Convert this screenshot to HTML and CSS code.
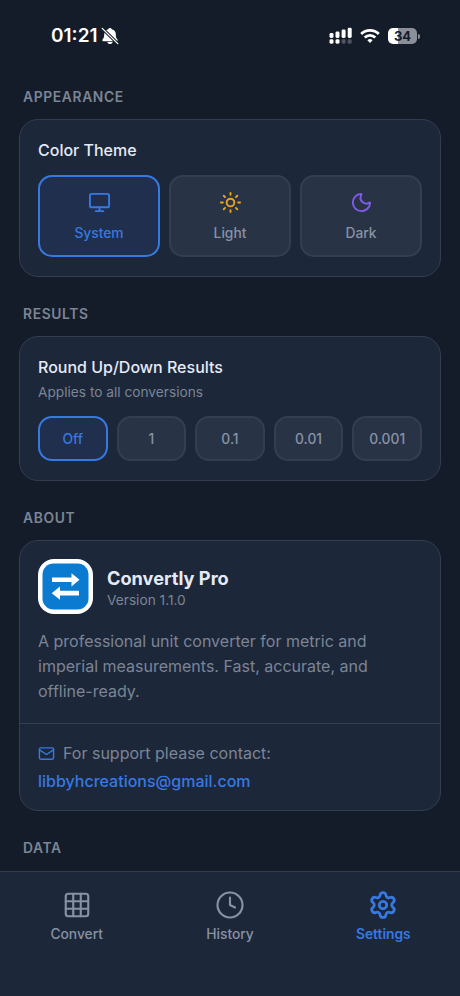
FILE: index.html
```html
<!DOCTYPE html>
<html lang="en">
<head>
    <meta charset="UTF-8">
    <meta name="viewport" content="width=device-width, initial-scale=1.0">
    <title>Convertly Pro - Settings</title>
    <link rel="stylesheet" href="styles.css">
</head>
<body>
    <div class="app">
        <div class="status-bar">
            <span class="time">01:21</span>
            <svg class="bell" width="18" height="18" viewBox="0 0 18 18">
                <path d="M9 1c.9 0 1.6.6 1.8 1.3 2.6.7 4 2.6 4 5 0 3.2.6 4 1.5 5 .6.7.4 1.9-.6 1.9H2.3c-1 0-1.2-1.2-.6-1.9.9-1 1.5-1.8 1.5-5 0-2.4 1.4-4.3 4-5C7.4 1.6 8.1 1 9 1zM6.4 14.9h5.2c-.2 1.3-1.4 2.1-2.6 2.1s-2.4-.8-2.6-2.1z" fill="#fff"/>
                <path d="M1.2 1.4l15.6 15.2" stroke="#151c29" stroke-width="3.2"/>
                <path d="M1.2 1.4l15.6 15.2" stroke="#fff" stroke-width="1.3" stroke-linecap="round"/>
            </svg>
            <svg class="signal" width="24" height="18" viewBox="0 0 24 18" fill="#fff">
                <rect x="0.5" y="6" width="4" height="5" rx="1.4"/>
                <rect x="6.5" y="4.5" width="4" height="6.5" rx="1.4"/>
                <rect x="12.6" y="2.5" width="4" height="8.5" rx="1.4"/>
                <rect x="18.7" y="0.8" width="4" height="10.2" rx="1.4"/>
                <rect x="0.5" y="12.3" width="4" height="4.4" rx="1.4"/>
                <rect x="6.5" y="12.3" width="4" height="4.4" rx="1.4"/>
                <rect x="12.6" y="12.3" width="4" height="4.4" rx="1.4" opacity="0.25"/>
                <rect x="18.7" y="12.3" width="4" height="4.4" rx="1.4" opacity="0.25"/>
            </svg>
            <svg class="wifi" width="20" height="16" viewBox="0 0 20 16" fill="none" stroke="#fff" stroke-width="2.8">
                <path d="M1.2 5.9a12.5 12.5 0 0 1 17.6 0"/>
                <path d="M4.7 9.5a7.6 7.6 0 0 1 10.6 0"/>
                <path d="M10 14.9l-2.6-2.7a3.7 3.7 0 0 1 5.2 0z" fill="#fff" stroke="none"/>
            </svg>
            <div class="battery"><span>34</span></div>
        </div>

        <main class="content">
            <h2 class="section-title">APPEARANCE</h2>
            <div class="card appearance">
                <h3 class="card-title">Color Theme</h3>
                <div class="theme-row">
                    <button class="option theme active">
                        <svg class="icon" viewBox="0 0 24 24"><rect x="2" y="3" width="20" height="14" rx="2"/><path d="M8 21h8M12 17v4"/></svg>
                        System
                    </button>
                    <button class="option theme">
                        <svg class="icon sun" viewBox="0 0 24 24"><circle cx="12" cy="12" r="4"/><path d="M12 2v2M12 20v2M4.93 4.93l1.41 1.41M17.66 17.66l1.41 1.41M2 12h2M20 12h2M6.34 17.66l-1.41 1.41M19.07 4.93l-1.41 1.41"/></svg>
                        Light
                    </button>
                    <button class="option theme">
                        <svg class="icon moon" viewBox="0 0 24 24"><path d="M20.985 12.486a9 9 0 1 1-9.473-9.472c.405-.022.617.46.402.803a6 6 0 0 0 8.268 8.268c.344-.215.825-.004.803.401"/></svg>
                        Dark
                    </button>
                </div>
            </div>

            <h2 class="section-title">RESULTS</h2>
            <div class="card results">
                <h3 class="card-title">Round Up/Down Results</h3>
                <p class="hint">Applies to all conversions</p>
                <div class="round-row">
                    <button class="option round active">Off</button>
                    <button class="option round">1</button>
                    <button class="option round">0.1</button>
                    <button class="option round">0.01</button>
                    <button class="option round">0.001</button>
                </div>
            </div>

            <h2 class="section-title">ABOUT</h2>
            <div class="card about">
                <div class="about-main">
                    <div class="app-info">
                        <svg class="app-icon" width="55" height="55" viewBox="0 0 55 55">
                            <rect width="55" height="55" rx="16" fill="#fff"/>
                            <rect x="4.5" y="4.5" width="46" height="46" rx="11" fill="#0a7bd0"/>
                            <path d="M14 18.5h19.5v-4.3l8 6.5-8 6.7V23H14zM41 31.8H22v-4.3l-8.3 6.7 8.3 6.5v-4.2h19z" fill="#fff"/>
                        </svg>
                        <div class="app-text">
                            <div class="app-name">Convertly Pro</div>
                            <div class="version">Version 1.1.0</div>
                        </div>
                    </div>
                    <p class="description">A professional unit converter for metric and imperial measurements. Fast, accurate, and offline-ready.</p>
                </div>
                <div class="support">
                    <div class="support-label">
                        <svg class="mail" viewBox="0 0 24 24"><rect x="2" y="4" width="20" height="16" rx="2"/><path d="m22 7-8.991 5.727a2 2 0 0 1-2.009 0L2 7"/></svg>
                        For support please contact:
                    </div>
                    <a class="email" href="mailto:libbyhcreations@gmail.com">libbyhcreations@gmail.com</a>
                </div>
            </div>

            <h2 class="section-title">DATA</h2>
        </main>

        <nav class="tab-bar">
            <a class="tab">
                <svg class="tab-icon" viewBox="0 0 24 24"><rect x="3" y="3" width="18" height="18" rx="2"/><path d="M3 9h18M3 15h18M9 3v18M15 3v18"/></svg>
                Convert
            </a>
            <a class="tab">
                <svg class="tab-icon" viewBox="0 0 24 24"><circle cx="12" cy="12" r="10"/><path d="M12 6v6l4 2"/></svg>
                History
            </a>
            <a class="tab current">
                <svg class="tab-icon" viewBox="0 0 24 24"><path d="M9.671 4.136a2.34 2.34 0 0 1 4.659 0 2.34 2.34 0 0 0 3.319 1.915 2.34 2.34 0 0 1 2.33 4.033 2.34 2.34 0 0 0 0 3.831 2.34 2.34 0 0 1-2.33 4.033 2.34 2.34 0 0 0-3.319 1.915 2.34 2.34 0 0 1-4.659 0 2.34 2.34 0 0 0-3.32-1.915 2.34 2.34 0 0 1-2.33-4.033 2.34 2.34 0 0 0 0-3.831A2.34 2.34 0 0 1 6.35 6.051a2.34 2.34 0 0 0 3.319-1.915"/><circle cx="12" cy="12" r="3"/></svg>
                Settings
            </a>
        </nav>
    </div>
</body>
</html>
```
FILE: styles.css
```css
* {
    box-sizing: border-box;
    margin: 0;
    padding: 0;
}
body {
    font-family: Inter, "Liberation Sans", sans-serif;
    background-color: #151c29;
    color: #e4ebf6;
}
.app {
    display: flex;
    flex-direction: column;
    height: 996px;
    overflow: hidden;
}
.status-bar {
    display: flex;
    align-items: center;
    height: 60px;
    padding: 11px 43px 0 51px;
    flex-shrink: 0;
}
.time {
    font-size: 19px;
    font-weight: 600;
    line-height: 24px;
    color: #fff;
}
.bell {
    margin-left: 3px;
}
.signal {
    margin-left: auto;
}
.wifi {
    margin: 0 8px 0 7px;
}
.battery {
    position: relative;
    width: 29px;
    height: 16px;
    border-radius: 5px;
    background: linear-gradient(to right, #fff 10px, #8b8f98 10px);
    color: #151c29;
    font-size: 13px;
    font-weight: 700;
    line-height: 16px;
    text-align: center;
}
.battery::after {
    content: "";
    position: absolute;
    right: -3px;
    top: 6px;
    width: 2px;
    height: 5px;
    border-radius: 0 2px 2px 0;
    background: #8b8f98;
}
.content {
    flex: 1;
    min-height: 0;
    padding: 0 19px;
    overflow: hidden;
}

/* Sections */
.section-title {
    padding: 26.5px 4px 12.5px;
    font-size: 13.8px;
    font-weight: 600;
    line-height: 20px;
    letter-spacing: 0.65px;
    color: #7b8595;
}
.card {
    border: 1px solid #323d4f;
    border-radius: 19px;
    background-color: #1d273a;
}
.appearance {
    height: 158px;
    padding: 18px;
}
.results {
    height: 145px;
    padding: 18px;
}
.card-title {
    font-size: 16px;
    font-weight: 500;
    line-height: 24px;
}
.theme-row {
    display: flex;
    gap: 9px;
    margin-top: 13px;
}
.option {
    flex: 1;
    border: 2px solid #333e4f;
    border-radius: 14px;
    background-color: #293346;
    color: #8792a5;
    font-family: inherit;
    font-size: 13.8px;
    font-weight: 500;
}
.option.active {
    border-color: #3679e2;
    background-color: #202f4e;
    color: #3679e2;
}
.theme {
    display: flex;
    flex-direction: column;
    align-items: center;
    gap: 9px;
    height: 82px;
    padding-top: 14px;
    line-height: 20px;
}
.icon,
.mail,
.tab-icon {
    fill: none;
    stroke: currentColor;
    stroke-width: 2;
    stroke-linecap: round;
    stroke-linejoin: round;
}
.icon {
    width: 23px;
    height: 23px;
}
.sun {
    color: #eba31c;
}
.moon {
    color: #805bec;
}
.hint {
    margin-top: 2px;
    font-size: 13.7px;
    line-height: 22px;
    color: #7b8595;
}
.round-row {
    display: flex;
    gap: 9px;
    margin-top: 13px;
}
.round {
    height: 45px;
}

/* About */
.about {
    height: 271px;
}
.about-main {
    height: 183px;
    padding: 18px;
    border-bottom: 1px solid #344052;
}
.app-info {
    display: flex;
    align-items: center;
    gap: 14px;
}
.app-text {
    padding-top: 3px;
}
.app-name {
    font-size: 18.2px;
    font-weight: 700;
    line-height: 24px;
}
.version {
    font-size: 13.7px;
    line-height: 20px;
    color: #7b8595;
}
.description {
    margin-top: 15px;
    font-size: 16px;
    line-height: 25px;
    color: #7b8595;
}
.support {
    padding: 16px 18px;
    font-size: 16px;
}
.support-label {
    display: flex;
    align-items: center;
    gap: 8px;
    line-height: 26px;
    color: #7b8595;
}
.mail {
    width: 17px;
    height: 17px;
    color: #3679e2;
}
.email {
    display: block;
    margin-top: 2px;
    line-height: 26px;
    font-weight: 500;
    color: #3679e2;
    text-decoration: none;
}

/* Bottom tabs */
.tab-bar {
    display: flex;
    flex-shrink: 0;
    height: 125px;
    border-top: 1px solid #343c4e;
    background-color: #1d273a;
}
.tab {
    display: flex;
    flex: 1;
    flex-direction: column;
    align-items: center;
    gap: 4px;
    padding-top: 18px;
    font-size: 13.8px;
    font-weight: 500;
    line-height: 20px;
    color: #8792a5;
}
.tab-icon {
    width: 30px;
    height: 30px;
    stroke-width: 1.7;
}
.tab.current {
    font-weight: 600;
    color: #3679e2;
}
.current .tab-icon {
    stroke-width: 2.2;
}
```
